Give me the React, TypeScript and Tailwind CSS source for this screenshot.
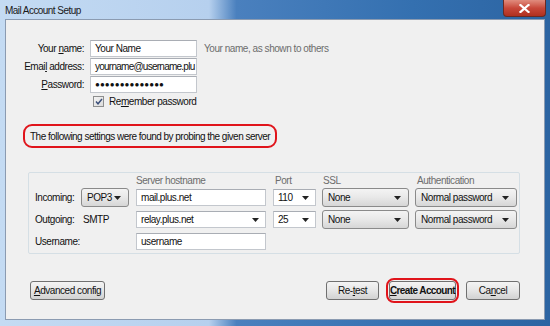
import React from "react";

const font = "font-['Liberation_Sans',Arial,sans-serif]";

const Key = ({ children }: { children: React.ReactNode }) => (
  <span className="underline underline-offset-1">{children}</span>
);

const Arrow = () => (
  <svg width="7" height="4" viewBox="0 0 7 4" className="shrink-0">
    <path d="M0 0h7L3.5 4z" fill="#222" />
  </svg>
);

const TextBox = ({
  value,
  className = "",
  arrow = false,
}: {
  value: string;
  className?: string;
  arrow?: boolean;
}) => (
  <div
    className={`flex h-[17px] items-center overflow-hidden whitespace-nowrap border border-[#c3c7cd] border-t-[#a9adb4] bg-white pl-[4px] pr-[6px] text-[#111] ${className}`}
  >
    <span className="min-w-0 grow">{value}</span>
    {arrow && <Arrow />}
  </div>
);

const Dropdown = ({ value, className = "" }: { value: string; className?: string }) => (
  <div
    className={`flex h-[19px] items-center whitespace-nowrap rounded-[3px] border border-[#8a8a8a] bg-gradient-to-b from-[#f4f4f4] via-[#e8e8e8] to-[#d6d6d6] pl-[5px] pr-[7px] text-[#111] ${className}`}
  >
    <span className="grow">{value}</span>
    <Arrow />
  </div>
);

const Button = ({
  children,
  className = "",
}: {
  children: React.ReactNode;
  className?: string;
}) => (
  <div
    className={`flex h-[19px] items-center justify-center whitespace-nowrap rounded-[3px] border border-[#707070] bg-gradient-to-b from-[#f4f4f4] via-[#e6e6e6] to-[#d2d2d2] text-[#111] ${className}`}
  >
    <span>{children}</span>
  </div>
);

export default function App() {
  return (
    <div
      className={`flex h-[326px] w-[550px] flex-col whitespace-nowrap bg-[linear-gradient(90deg,#c4dbf3_0%,#b6d0ee_38%,#4a80be_43%,#3470b0_75%,#2c64a2_100%)] px-[5px] pb-[6px] text-[10px] tracking-[-0.45px] ${font}`}
    >
      <div className="flex h-[19px] items-start justify-between">
        <span className="pt-[3px] text-[10px] tracking-[-0.55px] text-[#1a1a1a]">Mail Account Setup</span>
        <div className="mr-[-1px] flex h-[17px] w-[43px] items-center justify-center rounded-b-[4px] border border-t-0 border-[#6b2a22] bg-gradient-to-b from-[#e08c7e] via-[#c8483a] to-[#b0301f]">
          <svg width="11" height="9" viewBox="0 0 11 9">
            <path
              d="M1.5 1l8 7M9.5 1l-8 7"
              stroke="white"
              strokeWidth="2.2"
              strokeLinecap="square"
            />
          </svg>
        </div>
      </div>

      <div className="flex grow flex-col border border-[#8b9bb1] bg-[#f0f0f0] pt-[20px]">
        {/* account rows */}
        <div className="flex flex-col gap-[1px]">
          {[
            { label: <>Your <Key>n</Key>ame:</>, value: "Your Name", hint: true },
            { label: <>Emai<Key>l</Key> address:</>, value: "yourname@username.plu" },
            { label: <><Key>P</Key>assword:</>, value: "●●●●●●●●●●●●●●" },
          ].map((row, i) => (
            <div key={i} className="flex items-center">
              <div className="w-[78px] text-right text-[#111]">{row.label}</div>
              <TextBox
                value={row.value}
                className={`ml-[6px] w-[107px] ${i === 2 ? "text-[8px] tracking-[0.1px]" : ""} ${i === 1 ? "pl-[3px] pr-[0px] tracking-[-0.75px]" : ""}`}
              />
              {row.hint && (
                <span className="ml-[7px] text-[#6d6d6d]">Your name, as shown to others</span>
              )}
            </div>
          ))}
        </div>

        <div className="ml-[87px] mt-[1px] flex items-center gap-[5px]">
          <div className="flex h-[11px] w-[11px] items-center justify-center border border-[#8e8f8f] bg-gradient-to-br from-[#f4f4f4] to-[#dcdcdc]">
            <svg width="8" height="7" viewBox="0 0 8 7">
              <path d="M1 3.5l2 2.3L7 1" stroke="#3b4f7a" strokeWidth="1.4" fill="none" />
            </svg>
          </div>
          <span className="text-[#111]">
            Re<Key>m</Key>ember password
          </span>
        </div>

        <div className="ml-[17px] mt-[15px] flex h-[24px] w-[254px] items-center rounded-[9px] border-2 border-[#e0141b] pl-[5px] tracking-[-0.52px] text-[#111]">
          The following settings were found by probing the given server
        </div>

        {/* server settings group */}
        <div className="ml-[22px] mt-[24px] w-[492px] rounded-[2px] border border-[#d5dfe5] px-[6px] pb-[3px]">
          <div className="grid grid-cols-[46px_55px_137px_49px_93px_102px] items-center">
            <div />
            <div />
            <div className="h-[13px] text-[#6d6d6d]">Server hostname</div>
            <div className="h-[13px] pl-[2px] text-[#6d6d6d]">Port</div>
            <div className="h-[13px] pl-[1px] text-[#6d6d6d]">SSL</div>
            <div className="h-[13px] pl-[2px] text-[#6d6d6d]">Authentication</div>

            <div className="mt-[2px] text-[#111]">Incoming:</div>
            <Dropdown value="POP3" className="mt-[2px] w-[48px]" />
            <TextBox value="mail.plus.net" className="mt-[2px] w-[130px]" />
            <TextBox value="110" arrow className="mt-[2px] w-[43px]" />
            <Dropdown value="None" className="mt-[2px] w-[87px]" />
            <Dropdown value="Normal password" className="mt-[2px] w-[102px]" />

            <div className="mt-[3px] text-[#111]">Outgoing:</div>
            <div className="mt-[3px] pl-[2px] text-[#111]">SMTP</div>
            <TextBox value="relay.plus.net" arrow className="mt-[3px] w-[130px]" />
            <TextBox value="25" arrow className="mt-[3px] w-[43px]" />
            <Dropdown value="None" className="mt-[3px] w-[87px]" />
            <Dropdown value="Normal password" className="mt-[3px] w-[102px]" />

            <div className="mt-[4px] text-[#111]">Username:</div>
            <div />
            <TextBox value="username" className="mt-[4px] w-[130px]" />
            <div />
            <div />
            <div />
          </div>
        </div>

        {/* buttons */}
        <div className="mt-[24px] flex items-center px-[24px]">
          <Button className="w-[75px]">
            <Key>A</Key>dvanced config
          </Button>
          <div className="grow" />
          <Button className="w-[53px]">
            Re-<Key>t</Key>est
          </Button>
          <div className="ml-[7px] rounded-[8px] border-2 border-[#e0141b] p-[1px]">
            <Button className="w-[67px] border-[#3c7fb1] font-bold tracking-[-0.6px]">
              <Key>C</Key>reate Account
            </Button>
          </div>
          <Button className="ml-[7px] w-[54px]">
            Ca<Key>n</Key>cel
          </Button>
        </div>
      </div>
    </div>
  );
}
